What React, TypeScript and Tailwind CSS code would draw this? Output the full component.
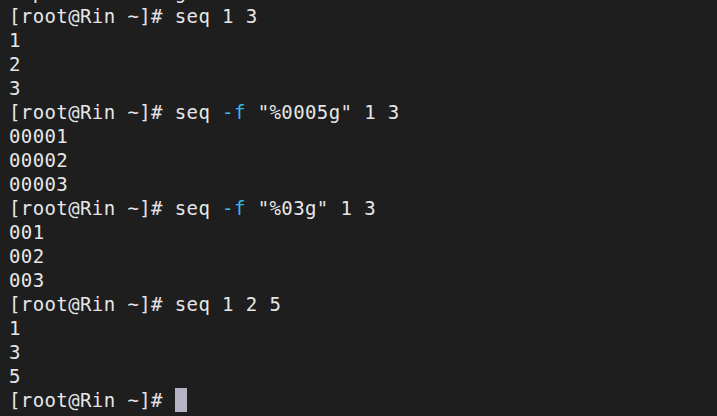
type Seg = { t: string; blue?: boolean };

// first row is scrolled mostly off the top, only descenders show
const rows: Seg[][] = [
  [{ t: "  p           g" }],
  [{ t: "[root@Rin ~]# seq 1 3" }],
  [{ t: "1" }],
  [{ t: "2" }],
  [{ t: "3" }],
  [{ t: "[root@Rin ~]# seq " }, { t: "-f", blue: true }, { t: ' "%0005g" 1 3' }],
  [{ t: "00001" }],
  [{ t: "00002" }],
  [{ t: "00003" }],
  [{ t: "[root@Rin ~]# seq " }, { t: "-f", blue: true }, { t: ' "%03g" 1 3' }],
  [{ t: "001" }],
  [{ t: "002" }],
  [{ t: "003" }],
  [{ t: "[root@Rin ~]# seq 1 2 5" }],
  [{ t: "1" }],
  [{ t: "3" }],
  [{ t: "5" }],
];

export default function App() {
  return (
    <div className="h-[416px] w-[717px] overflow-hidden bg-[#1e1e1e]">
      <div className="-mt-[20px] pl-[9px] font-['DejaVu_Sans_Mono',monospace] text-[19px] leading-[24px] tracking-[0.4px] text-[#e6e6e6] whitespace-pre">
        {rows.map((row, i) => (
          <div key={i} className="h-[24px]">
            {row.map((s, j) => (
              <span key={j} className={s.blue ? "text-[#3bb6e8]" : undefined}>
                {s.t}
              </span>
            ))}
          </div>
        ))}
        <div className="flex h-[24px] items-center">
          <span>[root@Rin ~]# </span>
          <span className="h-[24px] w-[12px] bg-[#b4b4c4]" />
        </div>
      </div>
    </div>
  );
}
